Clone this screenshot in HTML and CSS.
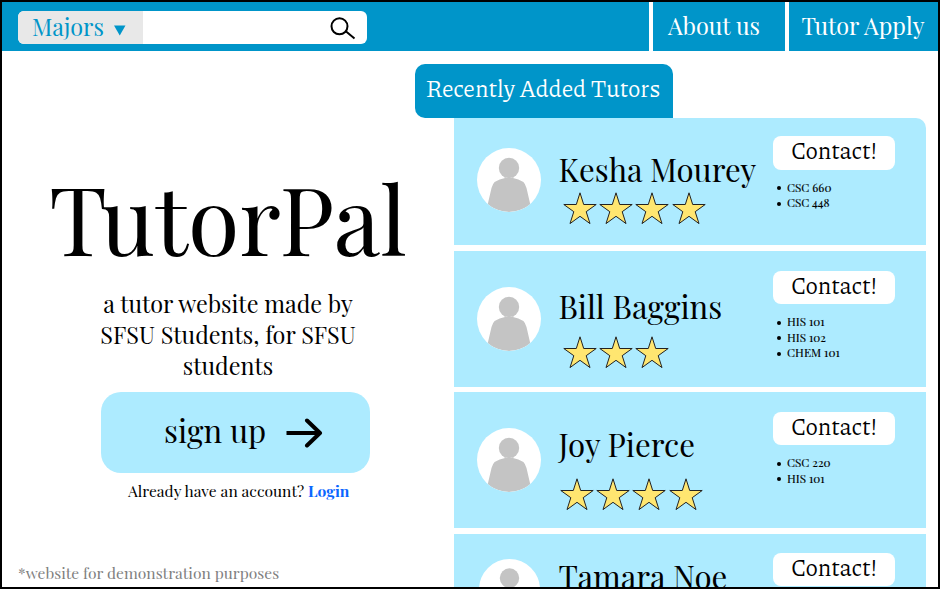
FILE: index.html
```html
<!DOCTYPE html>
<html lang="en">
<head>
<meta charset="utf-8">
<title>TutorPal</title>
<link rel="stylesheet" href="styles.css">
</head>
<body>
<svg class="defs" width="0" height="0" aria-hidden="true">
  <symbol id="person" viewBox="0 0 64 64">
    <circle cx="32" cy="20" r="10.2"/>
    <path d="M26 28 Q32 32 38 28 L36 30 Q48 32 49.500 40 L53.300 56.500 Q43 64 32 64 Q21 64 10.700 56.500 L14.500 40 Q16 32 28 30 Z"/>
  </symbol>
  <symbol id="star" viewBox="0 0 36 34">
    <path d="M18 1.800 L21.700 13.500 H34.200 L24.200 20.700 L28 32.600 L18 25.300 L8 32.600 L11.800 20.700 L1.800 13.500 H14.300 Z"/>
  </symbol>
</svg>
<div class="frame">
  <header class="topbar">
    <div class="search">
      <div class="majors"><span>Majors</span><svg width="12" height="11" viewBox="0 0 12 11"><path d="M0 0.500H11.500L5.750 10.500Z"/></svg></div>
      <svg class="lens" width="26" height="24" viewBox="0 0 26 24"><circle cx="9.500" cy="9.300" r="8"/><path d="M15.500 14 L24.500 21.500"/></svg>
    </div>
    <nav class="links"><a class="about">About us</a><a class="apply">Tutor Apply</a></nav>
  </header>
  <main>
    <section class="hero">
      <h1>TutorPal</h1>
      <p class="tagline">a tutor website made by<br>SFSU Students, for SFSU<br>students</p>
      <a class="signup"><span>sign up</span><svg width="37" height="30" viewBox="0 0 37 30"><path class="shaft" d="M0.500 15H34"/><path class="head" d="M21 2.500L34 15L21 27.500"/></svg></a>
      <p class="login">Already have an account? <a>Login</a></p>
      <p class="note">*website for demonstration purposes</p>
    </section>
    <section class="recent">
      <h2>Recently Added Tutors</h2>
      <div class="cards">
        <article class="card kesha">
          <svg class="avatar"><use href="#person"/></svg>
          <div class="who"><h3>Kesha Mourey</h3><div class="stars"><svg><use href="#star"/></svg><svg><use href="#star"/></svg><svg><use href="#star"/></svg><svg><use href="#star"/></svg></div></div>
          <div class="side"><a class="contact">Contact!</a><ul><li>CSC 660</li><li>CSC 448</li></ul></div>
        </article>
        <article class="card bill">
          <svg class="avatar"><use href="#person"/></svg>
          <div class="who"><h3>Bill Baggins</h3><div class="stars"><svg><use href="#star"/></svg><svg><use href="#star"/></svg><svg><use href="#star"/></svg></div></div>
          <div class="side"><a class="contact">Contact!</a><ul><li>HIS 101</li><li>HIS 102</li><li>CHEM 101</li></ul></div>
        </article>
        <article class="card joy">
          <svg class="avatar"><use href="#person"/></svg>
          <div class="who"><h3>Joy Pierce</h3><div class="stars"><svg><use href="#star"/></svg><svg><use href="#star"/></svg><svg><use href="#star"/></svg><svg><use href="#star"/></svg></div></div>
          <div class="side"><a class="contact">Contact!</a><ul><li>CSC 220</li><li>HIS 101</li></ul></div>
        </article>
        <article class="card tamara">
          <svg class="avatar"><use href="#person"/></svg>
          <div class="who"><h3>Tamara Noe</h3></div>
          <div class="side"><a class="contact">Contact!</a></div>
        </article>
      </div>
    </section>
  </main>
</div>
</body>
</html>
```
FILE: styles.css
```css
* { box-sizing: border-box; margin: 0; padding: 0; }
body { background: #fff; color: #000; font-family: "Playfair Display", "Liberation Serif", serif; overflow: hidden; }
h1, h2, h3 { font-weight: 400; white-space: nowrap; }
svg { display: block; flex: none; }
.defs { position: absolute; }
.frame { width: 940px; height: 589px; border: 2px solid #000; overflow: hidden; }

.topbar { display: flex; justify-content: space-between; height: 49px; background: #0095c9; font-size: 23.400px; }
.search { display: flex; justify-content: space-between; width: 349px; height: 33px; margin: 9px 0 0 16px; border-radius: 6px; background: #fff; overflow: hidden; }
.majors { display: flex; width: 125px; padding-left: 14px; background: #e8e8e8; color: #0095c9; line-height: 31px; }
.majors svg { margin: 14.300px 0 0 10px; fill: #0095c9; }
.lens { margin: 6px 11px 0 0; fill: none; stroke: #000; stroke-width: 2; }
.links { display: flex; color: #fff; line-height: 47px; white-space: nowrap; }
.links a { border-left: 4px solid #fff; }
.about { width: 136px; padding-left: 15px; }
.apply { width: 153px; padding-left: 12.500px; }

main { display: flex; height: 536px; }
.hero { display: flex; flex-direction: column; width: 413px; flex: none; }
.hero h1 { margin: 111px 0 0 47px; font-size: 93.600px; line-height: 110px; }
.tagline { width: 374px; margin: 16px 0 0 39px; text-align: center; font-size: 23.400px; line-height: 31.200px; }
.signup { display: flex; width: 269px; height: 81px; margin: 10.400px 0 0 99px; padding-left: 63px; border-radius: 20px; background: #adebff; font-size: 31.200px; line-height: 76px; }
.signup svg { margin: 26px 0 0 20px; fill: none; stroke: #000; }
.shaft { stroke-width: 4; }
.head { stroke-width: 4; stroke-linecap: round; stroke-linejoin: round; }
.login { margin: 7px 0 0 126px; font-size: 15.600px; line-height: 22px; white-space: nowrap; }
.login a { color: #0a66ff; font-weight: 700; }
.note { margin: 59.600px 0 0 16px; color: #7f7f7f; font-size: 15.600px; line-height: 22px; }

.recent { width: 511px; padding-top: 13px; flex: none; }
.recent h2 { width: 258px; height: 54px; padding-left: 11px; border-radius: 10px 10px 0 10px; background: #0095c9; color: #fff; font-family: Piazzolla, Manuale, "Liberation Serif", serif; font-size: 23.400px; line-height: 48px; letter-spacing: 0.450px; }
.cards { display: flex; flex-direction: column; gap: 5.500px; margin-left: 39px; }
.card { display: flex; width: 472px; height: 136px; flex: none; background: #adebff; }
.kesha { height: 127px; border-top-right-radius: 10px; }
.avatar { width: 64px; height: 64px; margin: 36px 0 0 23px; border-radius: 50%; background: #fff; fill: #c4c4c4; }
.kesha .avatar { margin-top: 30px; }
.tamara .avatar { width: 61px; height: 61px; margin: 25.500px 1px 0 25px; }
.who { width: 232px; padding: 35px 0 0 17.500px; }
.kesha .who { padding-top: 31px; }
.joy .who { padding-top: 32px; }
.tamara .who { padding-top: 22px; }
.who h3 { font-size: 31.200px; line-height: 40px; }
.stars { display: flex; gap: 0.400px; margin: 9px 0 0 3px; }
.kesha .stars { margin-top: 2px; }
.joy .stars { margin: 13px 0 0 0; }
.stars svg { width: 36px; height: 34px; fill: #ffe670; stroke: #222; }
.side { padding-top: 20px; }
.joy .side { padding-top: 19.500px; }
.tamara .side { padding-top: 19px; }
.kesha .side { padding-top: 18px; }
.contact { display: block; width: 122px; height: 33.500px; border-radius: 8px; background: #fff; text-align: center; font-family: Piazzolla, Manuale, "Liberation Serif", serif; font-size: 23.400px; line-height: 28px; letter-spacing: 0.300px; }
.side ul { margin-top: 10px; padding-left: 14px; font-size: 11.700px; line-height: 15.600px; list-style: none; -webkit-text-stroke: 0.150px #000; }
.side li { position: relative; }
.side li::before { content: ""; position: absolute; left: -10px; top: 6.500px; width: 4px; height: 4px; border-radius: 50%; background: #000; }
```
